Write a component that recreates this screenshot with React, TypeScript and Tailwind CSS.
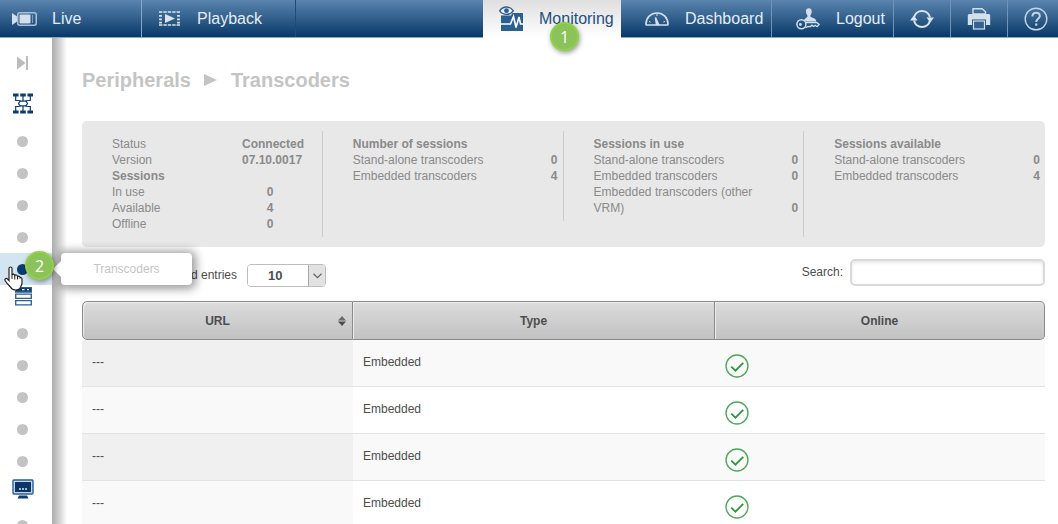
import type { ReactNode } from "react"
import clsx from "clsx"

const columns = [
  {
    title: "Number of sessions",
    rows: [
      ["Stand-alone transcoders", "0"],
      ["Embedded transcoders", "4"],
    ],
  },
  {
    title: "Sessions in use",
    rows: [
      ["Stand-alone transcoders", "0"],
      ["Embedded transcoders", "0"],
      ["Embedded transcoders (other VRM)", "0"],
    ],
  },
  {
    title: "Sessions available",
    rows: [
      ["Stand-alone transcoders", "0"],
      ["Embedded transcoders", "4"],
    ],
  },
]

const transcoders = [1, 2, 3, 4].map((id) => ({ id, url: "---", type: "Embedded" }))

function LiveIcon() {
  return (
    <svg width="25" height="14" viewBox="0 0 25 14" fill="#d3e0ec">
      <path d="M0 1l5 3.500v5L0 13z" />
      <rect x="5.75" y=".75" width="18.5" height="12.5" rx="2" fill="none" stroke="#a9c0d8" strokeWidth="1.5" />
      <rect x="7.5" y="2.5" width="11" height="9" rx="1" />
      <path d="M20.5 3v8" stroke="#7f9fc0" />
    </svg>
  )
}

function PlaybackIcon() {
  return (
    <svg width="21" height="15" viewBox="0 0 21 15" fill="#dbe6f0">
      <path d="M6 3l10 4.500L6 12z" />
      <path d="M0 1h21M0 14h21" stroke="#dbe6f0" strokeWidth="1.6" strokeDasharray="3.400 1" />
      <path d="M1.5 4v9M19.500 4v9" stroke="#dbe6f0" strokeWidth="2.8" strokeDasharray="1.800 1.600" />
    </svg>
  )
}

function MonitoringIcon() {
  return (
    <svg width="25" height="26" viewBox="0 0 25 26" fill="none">
      <path d="M2 7h22v18H2z" fill="#2a5f92" />
      <path d="M0 5h14.500L12 9.500H2L0 10z" fill="#ebebeb" />
      <path d="M.7 4.800C4-.3 11-.3 14.300 4.800 11 9.500 4 9.500.7 4.800z" fill="#f0f0f0" stroke="#2a5f92" strokeWidth="1.4" />
      <circle cx="7.5" cy="4.7" r="2.4" fill="#2a5f92" />
      <path d="M1 18h10.500l3-7.500 2.500 11 3-10.500 1.500 7H24" stroke="#fff" strokeWidth="1.6" />
    </svg>
  )
}

function DashboardIcon() {
  return (
    <svg width="24" height="14" viewBox="0 0 24 14" fill="none" stroke="#d3e0ec" strokeWidth="1.6">
      <path d="M1 12.200C1 5.700 5.800 1 12 1s11 4.700 11 11.200c0 .6-.3.8-.8.8H1.800c-.5 0-.8-.2-.8-.8z" />
      <path d="M10.500 5.500l1 7h2z" fill="#d3e0ec" />
      <path d="M4 9.500l1.600.6M20 9.500l-1.600.6M12 1.500V4" strokeWidth="1" />
    </svg>
  )
}

function LogoutIcon() {
  return (
    <svg width="24" height="22" viewBox="0 0 24 22" fill="#d3e0ec">
      <path d="M10 3.200C10 1 11 .2 12.800.2s2.900.9 2.900 3c0 2-.7 3.500-1.300 4v1.600l4 1.600c1.200.5 1.800 1.500 1.800 3.100h-9.200L8 12.200c.1-.9.600-1.500 1.400-1.800l2-1.600V7.200c-.8-.8-1.400-2-1.400-4z" />
      <circle cx="5.4" cy="16.3" r="4.5" fill="none" stroke="#d3e0ec" strokeWidth="1.5" />
      <circle cx="4.4" cy="16.5" r="1.4" />
      <path d="M9.500 14.500h11l2.700 2-2.200 2.200-1.800-1.400-1.500 1.200-1.700-1.300-1.500 1.400-2-.1-3 1.200" fill="none" stroke="#d3e0ec" strokeWidth="1.3" />
    </svg>
  )
}

function RefreshIcon() {
  return (
    <svg width="24" height="20" viewBox="0 0 24 20" fill="none" stroke="#d8e4ef" strokeWidth="2">
      <path d="M4 8.500a8.200 8.200 0 0 1 16 0" />
      <path d="M20 11.500a8.200 8.200 0 0 1-16 0" />
      <path d="M0 11.500l3.800-5 3.800 5z" fill="#d8e4ef" stroke="none" />
      <path d="M16.400 8.500H24l-3.800 5z" fill="#d8e4ef" stroke="none" />
    </svg>
  )
}

function PrintIcon() {
  return (
    <svg width="24" height="22" viewBox="0 0 24 22" fill="#d3e0ec">
      <path d="M6 6V.8h9l3.500 3V6z" fill="none" stroke="#d3e0ec" strokeWidth="1.4" />
      <path d="M2.500 6h19c1 0 1.700.7 1.700 1.700V17H.8V7.700C.8 6.700 1.500 6 2.500 6z" />
      <rect x="5" y="11.5" width="14" height="10" fill="#1f5082" />
      <rect x="6.500" y="13" width="11" height="8" fill="#34618f" stroke="#d3e0ec" strokeWidth="1.2" />
    </svg>
  )
}

function HelpIcon() {
  return (
    <svg width="24" height="24" viewBox="0 0 24 24" fill="none" stroke="#c3d4e5" strokeWidth="1.4">
      <circle cx="12" cy="12" r="10.8" />
      <path d="M8.400 9.500C8.400 7 10 5.800 12.100 5.800c2.200 0 3.700 1.300 3.700 3.200 0 2.800-3.600 2.800-3.600 6" strokeWidth="2" />
      <path d="M12.200 16.500v2.200" strokeWidth="2.2" />
    </svg>
  )
}

function CollapseIcon() {
  return (
    <svg width="12" height="14" viewBox="0 0 12 14" fill="#bcbcbc">
      <path d="M0 .5L8.500 7 0 13.500z" />
      <path d="M9 0h2v14H9z" />
    </svg>
  )
}

function NetworkIcon() {
  return (
    <svg width="20" height="21" viewBox="0 0 20 21" fill="none" stroke="#0b3e70" strokeWidth="1.2">
      <path d="M0 2h5.600M7.200 2h5.600M14.400 2H20M0 19h5.600M7.200 19h5.600M14.400 19H20" strokeWidth="3" />
      <path d="M2.700 3v4.500H6l2 1M17.300 3v4.500H14l-2 1M10 3v5M2.700 18v-4.500H6l2-1M17.300 18v-4.500H14l-2-1M10 18v-5" />
      <path d="M7 8.200h6l1.500 2.300-1.500 2.300H7l-1.500-2.300z" fill="#fff" />
    </svg>
  )
}

function ServerIcon() {
  return (
    <svg width="17" height="19" viewBox="0 0 17 19" fill="none" stroke="#2a5f92" strokeWidth="1.3">
      <path d="M.5.5h16v4.500H.5z" fill="#0b3e70" />
      <path d="M7 2.700h2.500M12 2.700h2" stroke="#fff" />
      <path d="M.7 7.200h15.600v4.100H.7zM.7 13.700h15.600v4.100H.7z" fill="#fff" />
    </svg>
  )
}

function MonitorIcon() {
  return (
    <svg width="22" height="20" viewBox="0 0 22 20" fill="none">
      <rect x="1" y="1" width="20" height="14" rx="1" fill="#c9d6e3" stroke="#2a5f92" strokeWidth="1.4" />
      <path d="M3 3h16v10H3z" fill="#0b3467" />
      <path d="M7 10h2M10 10h2M13 10h2" stroke="#dbe5ee" strokeWidth="1.5" />
      <path d="M7 16.500h8l1.500 3h-11z" fill="#0b3e70" />
    </svg>
  )
}

function CheckIcon() {
  return (
    <svg width="24" height="24" viewBox="0 0 23 23" fill="none" role="img" aria-label="Online">
      <circle cx="11.5" cy="11.5" r="10.5" stroke="#4fa75a" strokeWidth="1.3" />
      <path d="M6 12.200l4 3.800 7.500-7.500" stroke="#2f9440" strokeWidth="1.7" />
    </svg>
  )
}

function HandCursor() {
  return (
    <svg className="absolute top-[13px] left-[4px]" width="19" height="25" viewBox="0 0 19 25">
      <path
        d="M5 2.500C5 .5 8 .5 8 2.500V9c.6-1.400 2.800-1 2.800.5.8-1 2.700-.6 2.700 1 .9-.8 2.600-.3 2.600 1.300.8-.6 1.900 0 1.900 1.400V17c0 2.500-1.700 3.600-1.900 5.500-2.300 2-6.300 2-8.600 0-.5-1.500-3.600-3.500-6.300-7.800-1-1.800.9-3 2.300-1.700L5 14.500z"
        fill="#fff"
        stroke="#222"
        strokeWidth="1.2"
      />
      <path d="M8 9v4M10.800 9.500v4M13.500 10.500v3" stroke="#222" />
    </svg>
  )
}

function Badge({ children, className }: { children: ReactNode; className: string }) {
  return (
    <span
      className={clsx(
        "absolute z-20 flex size-[29px] items-center justify-center rounded-full border-2 border-[#92d047] bg-[#8bc25a] font-['Open_Sans',sans-serif] text-base leading-none text-white shadow-[1px_2px_5px_rgba(0,0,0,0.4)]",
        className,
      )}
    >
      {children}
    </span>
  )
}

function NavButton({ icon, label, className }: { icon: ReactNode; label: string; className: string }) {
  return (
    <button type="button" className={clsx("flex items-center text-base text-[#e4edf5]", className)}>
      {icon}
      <span>{label}</span>
    </button>
  )
}

function Dot() {
  return (
    <li className="flex h-8 shrink-0 items-center pl-[17px]">
      <span className="size-[11px] rounded-full bg-[#c3c3c3]" />
    </li>
  )
}

function Header() {
  return (
    <header className="relative z-30 flex h-[38px] shrink-0 border-b border-[#8ba6c1] bg-linear-to-b from-[#5985af] to-[#053968]">
      <NavButton icon={<LiveIcon />} label="Live" className="w-[142px] gap-[15px] border-r border-[#86a7c6] pl-3" />
      <NavButton icon={<PlaybackIcon />} label="Playback" className="w-[154px] gap-[17px] border-r border-[#1b4c7c] pl-[17px]" />
      <div className="flex-1" />
      <div className="relative -mb-px w-[138px]">
        <button
          type="button"
          className="flex size-full items-center gap-[15px] bg-linear-to-b from-[#dfdfdf] to-white pl-4 text-base text-[#23507c]"
        >
          <MonitoringIcon />
          <span>Monitoring</span>
        </button>
        <Badge className="top-[22px] left-[67px]">1</Badge>
      </div>
      <NavButton icon={<DashboardIcon />} label="Dashboard" className="w-[151px] gap-4 border-r border-[#6f94b8] pl-6" />
      <NavButton icon={<LogoutIcon />} label="Logout" className="w-[122px] gap-4 border-r border-[#6f94b8] pl-6" />
      <button type="button" aria-label="Refresh" className="flex w-[57px] items-center justify-center border-r border-[#6f94b8]">
        <RefreshIcon />
      </button>
      <button type="button" aria-label="Print" className="flex w-[57px] items-center justify-center border-r border-[#6f94b8]">
        <PrintIcon />
      </button>
      <button type="button" aria-label="Help" className="flex w-[50px] items-center pl-4">
        <HelpIcon />
      </button>
    </header>
  )
}

function Sidebar() {
  return (
    <nav className="relative z-10 w-[52px] shrink-0 bg-white">
      <button type="button" aria-label="Expand menu" className="flex h-[55px] w-full items-center pb-1.5 pl-[17px]">
        <CollapseIcon />
      </button>
      <ul>
        <li className="flex h-8 pl-[13px]">
          <NetworkIcon />
        </li>
        <Dot />
        <Dot />
        <Dot />
        <Dot />
        <li className="relative flex h-8 items-center bg-[#d3e5f1] pl-[17px]">
          <span className="size-[11px] rounded-full bg-[#0b3e70]" />
          <HandCursor />
          <Badge className="-top-0.5 left-[25px]">2</Badge>
          <div className="absolute top-0 left-[61px] flex h-8 w-[131px] items-center justify-center rounded-sm bg-white text-xs text-[#c4c4c4] shadow-[1px_1px_10px_3px_rgba(0,0,0,0.4)]">
            <span className="absolute top-2 -left-2 border-y-8 border-r-8 border-y-transparent border-r-white" />
            Transcoders
          </div>
        </li>
        <li className="flex h-8 pt-0.5 pl-[15px]">
          <ServerIcon />
        </li>
        <Dot />
        <Dot />
        <Dot />
        <Dot />
        <Dot />
        <li className="flex h-8 pt-0.5 pl-3">
          <MonitorIcon />
        </li>
        <Dot />
      </ul>
    </nav>
  )
}

function StatusPanel() {
  return (
    <section className="grid grid-cols-4 items-start rounded-[5px] bg-[#e8e8e8] py-2.5 text-xs leading-4 text-[#8a8a8a]">
      <dl className="grid h-[106px] grid-cols-[130px_56px] content-start border-r border-[#cbcbcb] py-[5px] pl-[30px] [&>dd]:text-center [&>dd]:font-bold [&>dd]:whitespace-nowrap">
        <dt>Status</dt>
        <dd>Connected</dd>
        <dt>Version</dt>
        <dd>07.10.0017</dd>
        <dt className="col-span-2 font-bold">Sessions</dt>
        <dt>In use</dt>
        <dd>0</dd>
        <dt>Available</dt>
        <dd>4</dd>
        <dt>Offline</dt>
        <dd>0</dd>
      </dl>
      {columns.map((column, i) => (
        <div
          key={column.title}
          className={clsx(
            "py-[5px] pr-[5px] pl-[30px]",
            i === 0 && "h-[90px] border-r border-[#cbcbcb]",
            i === 1 && "h-[106px] border-r border-[#cbcbcb]",
          )}
        >
          <h2 className="font-bold">{column.title}</h2>
          <dl>
            {column.rows.map(([label, value]) => (
              <div key={label} className="flex items-end justify-between">
                <dt className="max-w-[175px]">{label}</dt>
                <dd className="font-bold">{value}</dd>
              </div>
            ))}
          </dl>
        </div>
      ))}
    </section>
  )
}

function TableControls() {
  return (
    <div className="flex h-[54px] items-start pt-3 text-xs text-[#4d4d4d]">
      <label htmlFor="entries" className="mt-2 w-[155px] text-right">
        d entries
      </label>
      <div className="relative mt-[5px] ml-2.5 flex h-[23px] w-[79px] overflow-hidden rounded-sm border border-[#bdbdbd]">
        <select id="entries" defaultValue="10" className="w-full appearance-none bg-white pl-5 text-[13px] font-bold">
          <option>10</option>
          <option>25</option>
          <option>50</option>
        </select>
        <span className="pointer-events-none absolute inset-y-0 right-0 flex w-[17px] items-center justify-center border-l border-[#a8a8a8] bg-[#e2e2e2]">
          <svg width="9" height="6" viewBox="0 0 9 6" fill="none" stroke="#666" strokeWidth="1.3">
            <path d="M.5.7l4 4 4-4" />
          </svg>
        </span>
      </div>
      <label htmlFor="search" className="mt-[5px] ml-auto">
        Search:
      </label>
      <input
        id="search"
        type="text"
        className="ml-[7px] h-[27px] w-[195px] rounded-[5px] border-2 border-[#dadada] bg-white px-2 shadow-[inset_0_2px_3px_rgba(0,0,0,0.1)]"
      />
    </div>
  )
}

function TranscoderTable() {
  return (
    <table className="w-full table-fixed border-separate border-spacing-0 text-xs text-[#4d4d4d]">
      <thead>
        <tr className="h-[39px] *:border-y *:border-r *:border-[#8a8a8a] *:bg-linear-to-b *:from-[#dcdcdc] *:to-[#c2c2c2] *:p-0 *:shadow-[inset_1px_1px_0_#ececec]">
          <th className="w-[271px] rounded-l-[5px] border-l">
            <button type="button" className="relative h-full w-full font-bold">
              URL
              <svg className="absolute inset-y-0 right-[6px] my-auto" width="8" height="10" viewBox="0 0 8 10" fill="#4d4d4d">
                <path d="M0 4.500L4 0l4 4.500z" fill="#6a6a6a" />
                <path d="M0 5.500L4 10l4-4.500z" />
              </svg>
            </button>
          </th>
          <th className="w-[362px]">Type</th>
          <th className="rounded-r-[5px]">Online</th>
        </tr>
      </thead>
      <tbody>
        {transcoders.map((row) => (
          <tr
            key={row.id}
            className="h-[47px] odd:bg-[#f9f9f9] *:border-b *:border-[#e3e3e3] *:px-2.5 *:pt-3.5 *:pb-0 *:align-top"
          >
            <td className={row.id % 2 ? "bg-[#f0f0f0]" : "bg-[#f9f9f9]"}>{row.url}</td>
            <td>{row.type}</td>
            <td>
              <CheckIcon />
            </td>
          </tr>
        ))}
      </tbody>
    </table>
  )
}

export default function App() {
  return (
    <div className="flex h-screen flex-col overflow-hidden bg-white font-['Liberation_Sans',Arial,sans-serif]">
      <Header />
      <div className="flex min-h-0 flex-1">
        <Sidebar />
        <div className="w-[15px] shrink-0 bg-linear-to-r from-[#adadad] via-[#c6c6c6] via-35% to-white" />
        <main className="min-w-0 flex-1 pr-[13px] pl-[15px]">
          <h1 className="flex h-[83px] items-center gap-[13px] text-xl font-bold text-[#c4c4c4]">
            Peripherals
            <svg width="14" height="12" viewBox="0 0 14 12" fill="#c4c4c4" aria-hidden="true">
              <path d="M0 0l13 6-13 6z" />
            </svg>
            <span>Transcoders</span>
          </h1>
          <StatusPanel />
          <TableControls />
          <TranscoderTable />
        </main>
      </div>
    </div>
  )
}
